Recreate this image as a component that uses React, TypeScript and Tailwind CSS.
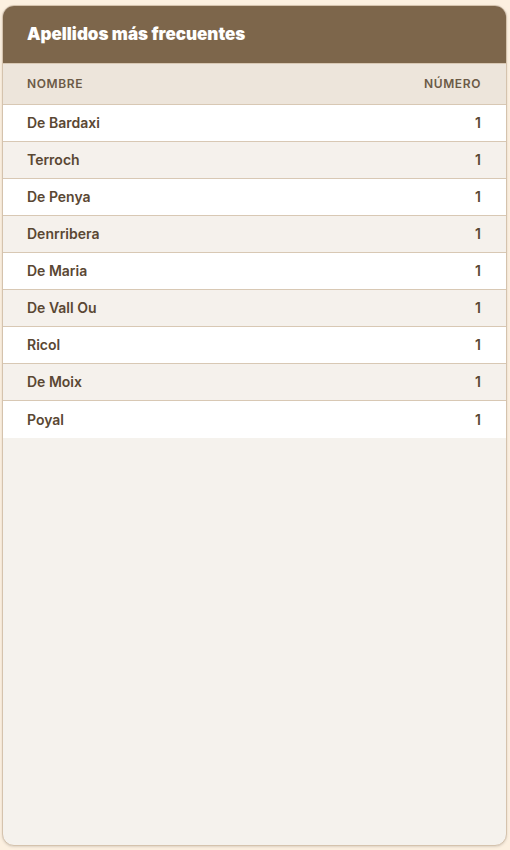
const rows = [
  { name: 'De Bardaxi', count: 1 },
  { name: 'Terroch', count: 1 },
  { name: 'De Penya', count: 1 },
  { name: 'Denrribera', count: 1 },
  { name: 'De Maria', count: 1 },
  { name: 'De Vall Ou', count: 1 },
  { name: 'Ricol', count: 1 },
  { name: 'De Moix', count: 1 },
  { name: 'Poyal', count: 1 },
]

const App = () => {
  return (
    <div className="min-h-[850px] bg-[#fcf0e0] px-[2px] pt-[5px] pb-[4px] font-['Inter',sans-serif]">
      <div className="flex h-[841px] w-[505px] flex-col overflow-hidden rounded-xl border border-[#d5c3ad] bg-[#f5f2ed] shadow-sm">
        <div className="flex h-[57px] items-center bg-[#7d664b] px-6">
          <h2 className="text-[17px] font-black text-white">Apellidos más frecuentes</h2>
        </div>
        <div className="flex h-[42px] items-center justify-between border-y border-[#d8c8b4] bg-[#ede5db] pr-[25px] pl-6 text-xs font-semibold tracking-wider text-[#6b5a46] uppercase">
          <span>Nombre</span>
          <span>Número</span>
        </div>
        <div>
          {rows.map((r, i) => (
            <div
              key={r.name}
              className={`flex h-[37px] items-center justify-between pr-[25px] pl-6 text-sm font-semibold text-[#5a4733] ${
                i < rows.length - 1 ? 'border-b border-[#d8c8b4]' : ''
              } ${i % 2 === 0 ? 'bg-white' : 'bg-[#f5f1ec]'}`}
            >
              <span>{r.name}</span>
              <span>{r.count}</span>
            </div>
          ))}
        </div>
      </div>
    </div>
  )
}

export default App
